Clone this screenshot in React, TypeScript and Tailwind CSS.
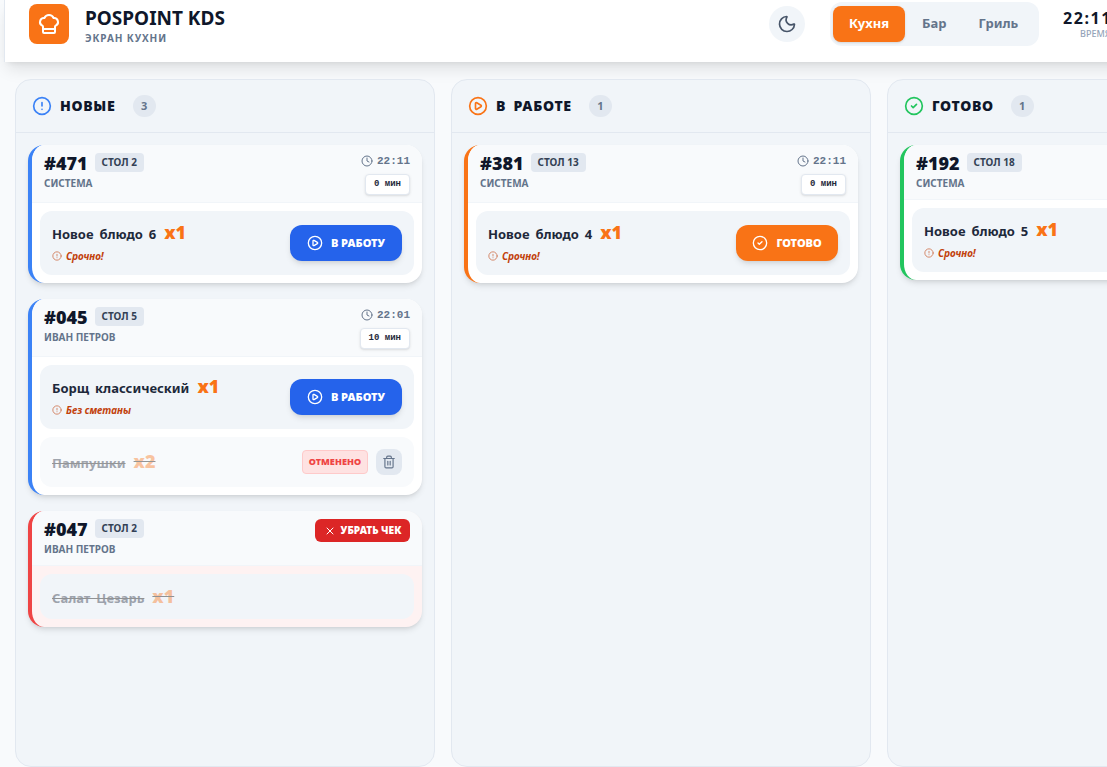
import { ChefHat, CircleAlert, CirclePlay, CircleCheck, Clock, Moon, Trash2, X } from 'lucide-react';

type Item = {
    name: string;
    qty: string;
    note?: string;
    action?: 'work' | 'done';
    cancelled?: boolean;
    struck?: boolean;
};

type Ticket = {
    id: string;
    table: string;
    by: string;
    time?: string;
    mins?: string;
    border: string;
    remove?: boolean;
    items: Item[];
};

const newTickets: Ticket[] = [
    {
        id: '#471', table: 'СТОЛ 2', by: 'СИСТЕМА', time: '22:11', mins: '0 мин', border: 'border-l-[#3b82f6]',
        items: [{ name: 'Новое блюдо 6', qty: 'x1', note: 'Срочно!', action: 'work' }],
    },
    {
        id: '#045', table: 'СТОЛ 5', by: 'ИВАН ПЕТРОВ', time: '22:01', mins: '10 мин', border: 'border-l-[#3b82f6]',
        items: [
            { name: 'Борщ классический', qty: 'x1', note: 'Без сметаны', action: 'work' },
            { name: 'Пампушки', qty: 'x2', cancelled: true, struck: true },
        ],
    },
    {
        id: '#047', table: 'СТОЛ 2', by: 'ИВАН ПЕТРОВ', border: 'border-l-[#ef4444]', remove: true,
        items: [{ name: 'Салат Цезарь', qty: 'x1', struck: true }],
    },
];

const workTickets: Ticket[] = [
    {
        id: '#381', table: 'СТОЛ 13', by: 'СИСТЕМА', time: '22:11', mins: '0 мин', border: 'border-l-[#f97316]',
        items: [{ name: 'Новое блюдо 4', qty: 'x1', note: 'Срочно!', action: 'done' }],
    },
];

const doneTickets: Ticket[] = [
    {
        id: '#192', table: 'СТОЛ 18', by: 'СИСТЕМА', border: 'border-l-[#22c55e]',
        items: [{ name: 'Новое блюдо 5', qty: 'x1', note: 'Срочно!' }],
    },
];

function ItemRow({ item }: { item: Item }) {
    return (
        <div className={`flex items-center justify-between rounded-xl px-3 ${item.cancelled ? 'h-[50px] bg-[#f8fafc]' : item.note ? 'h-16 bg-[#f1f5f9]' : 'h-[45px] bg-[#f1f5f9]'}`}>
            <div>
                <div className={`flex items-baseline gap-2 ${item.struck ? 'line-through opacity-40' : ''}`}>
                    <span className="text-[13px] font-bold leading-5 text-[#1e293b] [word-spacing:2.5px]">{item.name}</span>
                    <span className="text-lg font-black leading-5 text-[#f97316]">{item.qty}</span>
                </div>
                {item.note && (
                    <div className="mt-1 flex items-center gap-1 text-[10px] font-bold italic leading-4 text-[#c2410c]">
                        <CircleAlert size={10} className="opacity-70" />
                        {item.note}
                    </div>
                )}
            </div>
            {item.action === 'work' && (
                <button className="flex h-9 w-28 items-center justify-center gap-2 rounded-xl bg-[#2563eb] text-[11px] font-black text-white shadow-md">
                    <CirclePlay size={16} />
                    В РАБОТУ
                </button>
            )}
            {item.action === 'done' && (
                <button className="flex h-9 w-[102px] items-center justify-center gap-2 rounded-xl bg-[#f97316] text-[11px] font-black text-white shadow-md">
                    <CircleCheck size={16} />
                    ГОТОВО
                </button>
            )}
            {item.cancelled && (
                <div className="flex items-center gap-2">
                    <span className="flex h-6 items-center rounded border border-[#fecaca] bg-[#fee2e2] px-[6px] text-[9px] font-black text-[#ef4444]">ОТМЕНЕНО</span>
                    <button className="flex h-[26px] w-[26px] items-center justify-center rounded-lg bg-[#e2e8f0] text-[#64748b]">
                        <Trash2 size={14} />
                    </button>
                </div>
            )}
        </div>
    );
}

function TicketCard({ ticket }: { ticket: Ticket }) {
    return (
        <div className={`overflow-hidden rounded-2xl border-l-4 shadow-md ${ticket.border} ${ticket.remove ? 'bg-[#fef2f2]' : 'bg-white'}`}>
            <div className={`flex justify-between border-b border-[#f1f5f9] bg-[#f8fafc] py-2 pl-3 pr-3 ${ticket.mins ? 'h-[58px]' : 'h-[55px]'}`}>
                <div>
                    <div className="flex items-start gap-[7px]">
                        <span className="mt-px text-lg font-black leading-[19px] text-[#0f172a]">{ticket.id}</span>
                        <span className="rounded bg-[#e2e8f0] px-[7px] py-[2px] text-[10px] font-bold leading-[15px] text-[#334155]">{ticket.table}</span>
                    </div>
                    <div className="mt-[3px] text-[10px] font-bold leading-[15px] text-[#64748b]">{ticket.by}</div>
                </div>
                {ticket.remove && (
                    <button className="flex h-[23px] w-[95px] items-center justify-center gap-[5px] rounded-md bg-[#dc2626] text-[10px] font-black text-white">
                        <X size={12} />
                        УБРАТЬ ЧЕК
                    </button>
                )}
                {ticket.mins && (
                    <div className="flex flex-col items-end gap-[5px]">
                        <div className="flex items-center gap-1 font-mono text-[11px] font-semibold leading-4 text-[#64748b]">
                            <Clock size={12} />
                            {ticket.time}
                        </div>
                        <span className="rounded border border-[#e2e8f0] bg-white px-[8px] font-mono text-[9px] font-bold leading-[19px] text-[#1e293b] shadow-sm">{ticket.mins}</span>
                    </div>
                )}
            </div>
            <div className="flex flex-col gap-2 p-2">
                {ticket.items.map((item) => (
                    <ItemRow key={item.name} item={item} />
                ))}
            </div>
        </div>
    );
}

function Column({ title, count, icon, tickets }: { title: string; count: number; icon: React.ReactNode; tickets: Ticket[] }) {
    return (
        <section className="flex h-[688px] w-[420px] shrink-0 flex-col rounded-2xl border border-[#e2e8f0] bg-[#f1f5f9]">
            <div className="flex h-[53px] shrink-0 items-center border-b border-[#e2e8f0] pl-4">
                {icon}
                <span className="ml-2 text-sm font-black leading-5 tracking-wider text-[#0f172a] [word-spacing:3px]">{title}</span>
                <span className="ml-[17px] flex h-[22px] min-w-[23px] items-center justify-center rounded-full bg-[#e2e8f0] text-[11px] font-bold text-[#64748b]">{count}</span>
            </div>
            <div className="flex flex-col gap-4 p-3">
                {tickets.map((ticket) => (
                    <TicketCard key={ticket.id} ticket={ticket} />
                ))}
            </div>
        </section>
    );
}

export default function App() {
    return (
        <div className="h-[767px] w-[1107px] overflow-hidden bg-[#f8fafc] font-['Noto_Sans',sans-serif]">
            <header className="ml-1 flex h-[62px] w-[1200px] items-center border-l border-[#e2e8f0] bg-white pb-[14px] shadow-lg">
                <div className="ml-6 flex h-10 w-10 items-center justify-center rounded-lg bg-[#f97316] text-white">
                    <ChefHat size={24} />
                </div>
                <div className="ml-4 w-[139px] whitespace-nowrap">
                    <div className="text-[19px] font-bold leading-7 text-[#0f172a]">POSPOINT KDS</div>
                    <div className="text-[10px] font-bold leading-3 tracking-[0.09em] text-[#64748b]">ЭКРАН КУХНИ</div>
                </div>
                <button className="ml-[545px] flex h-9 w-9 items-center justify-center rounded-full bg-[#f1f5f9] text-[#475569]">
                    <Moon size={20} />
                </button>
                <nav className="ml-[25px] flex h-11 w-[209px] items-center rounded-xl bg-[#f1f5f9] px-[3px] text-[13px] font-bold text-[#64748b]">
                    <span className="flex h-9 w-[72px] items-center justify-center rounded-lg bg-[#f97316] text-white shadow-sm">Кухня</span>
                    <span className="ml-[17px]">Бар</span>
                    <span className="ml-8">Гриль</span>
                </nav>
                <div className="ml-6">
                    <div className="text-base font-bold leading-5 tracking-widest text-[#0f172a]">22:11</div>
                    <div className="ml-[17px] text-[9px] font-medium leading-3 text-[#94a3b8]">ВРЕМЯ</div>
                </div>
            </header>
            <main className="flex gap-4 pl-[15px] pt-[17px]">
                <Column title="НОВЫЕ" count={3} icon={<CircleAlert size={20} className="text-[#3b82f6]" />} tickets={newTickets} />
                <Column title="В РАБОТЕ" count={1} icon={<CirclePlay size={20} className="text-[#f97316]" />} tickets={workTickets} />
                <Column title="ГОТОВО" count={1} icon={<CircleCheck size={20} className="text-[#22c55e]" />} tickets={doneTickets} />
            </main>
        </div>
    );
}
